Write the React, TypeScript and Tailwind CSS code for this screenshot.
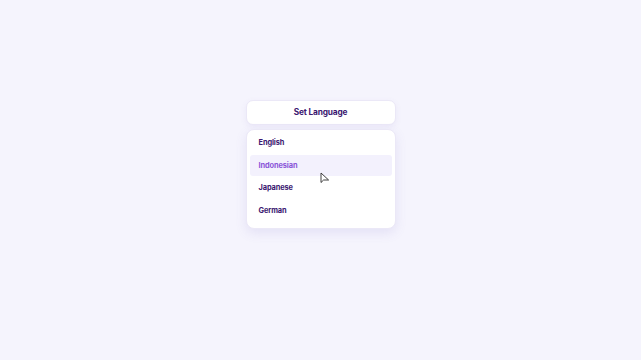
import React from 'react';

const LANGUAGES = ['English', 'Indonesian', 'Japanese', 'German'];

// --- Mouse pointer drawn over the hovered row ---

const Pointer: React.FC = () => (
  <svg
    className="absolute left-[70px] top-[16.5px] w-[10px] h-[12px]"
    viewBox="0 0 10 12"
    fill="none"
  >
    <path
      d="M1 1 L1 10.5 L3.6 8 L8.6 8 Z"
      fill="#ffffff"
      stroke="#2a2a2a"
      strokeWidth="0.9"
      strokeLinejoin="round"
    />
  </svg>
);

const App: React.FC = () => {
  const hovered = 'Indonesian';

  return (
    <div
      className="w-full h-screen bg-[#f5f4fd] flex flex-col items-center pt-[100px]"
      style={{ fontFamily: 'Inter, "Noto Sans", sans-serif' }}
    >
      <div className="w-[150px] flex flex-col gap-[4px]">
        <button className="h-[25px] w-full rounded-[7px] bg-white border border-[#ebe8f7] shadow-[0_2px_6px_rgba(110,90,190,0.08)] text-[8.3px] font-bold text-[#3b1770] tracking-[-0.15px]">
          Set Language
        </button>

        <div className="w-full rounded-[8px] bg-white border border-[#ebe8f7] shadow-[0_4px_12px_rgba(110,90,190,0.12)] px-[3px] pt-[2.5px] pb-[7px] flex flex-col gap-[1.5px]">
          {LANGUAGES.map((lang) => (
            <div
              key={lang}
              className={`relative h-[21px] flex items-center px-[9px] rounded-[3px] text-[7.4px] font-bold tracking-[-0.1px] ${
                lang === hovered ? 'bg-[#f3f1fd] text-[#8a57d8]' : 'text-[#3b1770]'
              }`}
            >
              {lang}
              {lang === hovered && <Pointer />}
            </div>
          ))}
        </div>
      </div>
    </div>
  );
};

export default App;
